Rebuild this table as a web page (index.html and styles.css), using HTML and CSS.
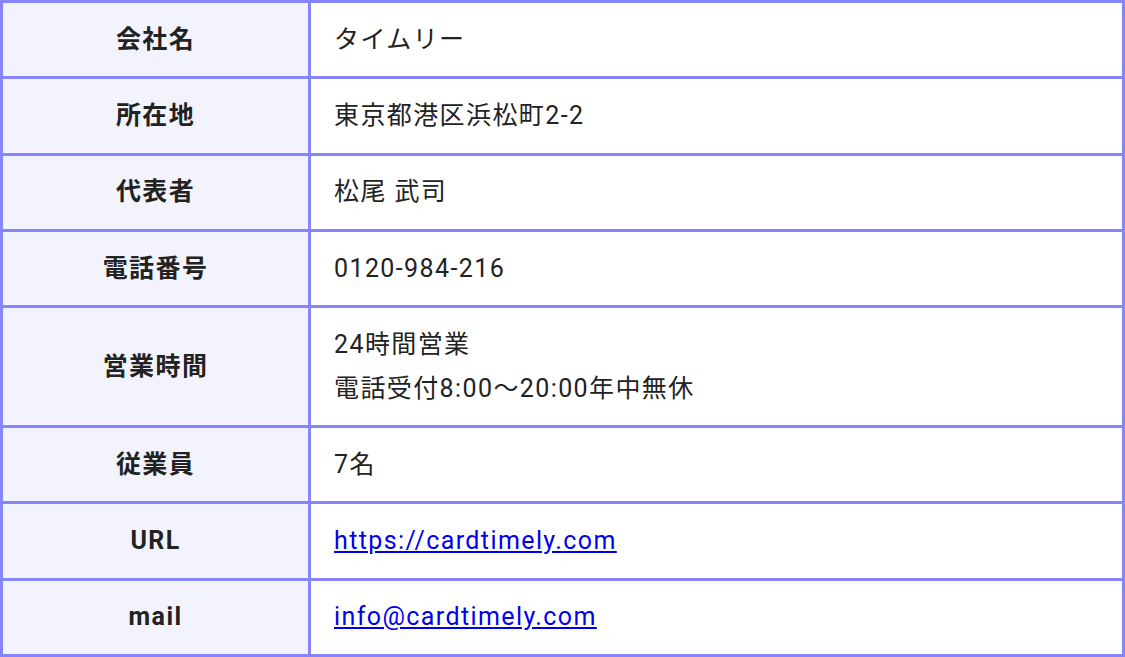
FILE: index.html
```html
<!DOCTYPE html>
<html lang="ja">
<head>
<meta charset="utf-8">
<link rel="stylesheet" href="styles.css">
</head>
<body>
<table class="info">
<tr><th>会社名</th><td>タイムリー</td></tr>
<tr><th>所在地</th><td>東京都港区浜松町2-2</td></tr>
<tr><th>代表者</th><td>松尾 武司</td></tr>
<tr><th>電話番号</th><td>0120-984-216</td></tr>
<tr><th>営業時間</th><td>24時間営業<br>電話受付8:00～20:00年中無休</td></tr>
<tr><th>従業員</th><td>7名</td></tr>
<tr><th>URL</th><td><a href="#">https://cardtimely.com</a></td></tr>
<tr><th>mail</th><td><a href="#">info@cardtimely.com</a></td></tr>
</table>
</body>
</html>
```

FILE: styles.css
```css
html, body {
  margin: 0;
  padding: 0;
  background: #ffffff;
}
body {
  font-family: Roboto, "Noto Sans CJK JP", sans-serif;
  color: #222222;
}
.info {
  width: 1125px;
  border-collapse: collapse;
  font-size: 25px;
  letter-spacing: 1.4px;
  line-height: 43.75px;
}
.info th, .info td {
  border: 3px solid #8585ff;
  padding: 14.75px 24px;
  vertical-align: middle;
}
.info th {
  width: 257px;
  background: #f3f3fd;
  font-weight: bold;
  text-align: center;
}
.info td {
  text-align: left;
  background: #ffffff;
  padding-left: 23px;
}
.info a {
  color: #0000ee;
  text-decoration: underline;
}
```
